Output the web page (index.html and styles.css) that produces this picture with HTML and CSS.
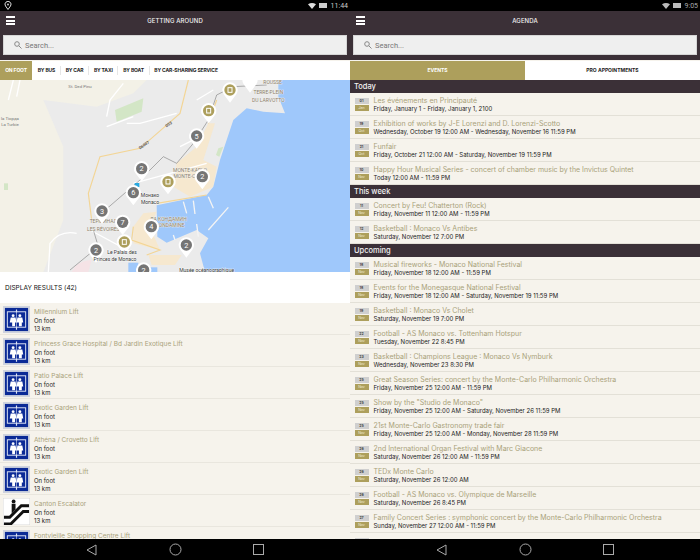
FILE: index.html
```html
<!DOCTYPE html>
<html lang="en">
<head>
<meta charset="utf-8">
<title>Monaco app</title>
<link rel="stylesheet" href="styles.css">
</head>
<body>
<svg class="defs" width="0" height="0" aria-hidden="true">
  <symbol id="lift" viewBox="0 0 28 28">
    <rect width="28" height="28" fill="#cfd3de"/>
    <rect x="2" y="2" width="24" height="24" fill="#0b2a96"/>
    <rect x="4.500" y="6" width="19" height="16" fill="none" stroke="#dfe6f5" stroke-width="1"/>
    <path d="M14 3.500v3M14 21.500v3" stroke="#dfe6f5" stroke-width="1.200"/>
    <path d="M14 6v16" stroke="#dfe6f5" stroke-width=".6"/>
    <g fill="#fff">
      <circle cx="10.500" cy="10" r="1.500"/><path d="M8 12h5l1 5h-1.500v4h-3v-4H7z"/>
      <circle cx="17.500" cy="10" r="1.500"/><path d="M15 12h5l1 5h-1.500v4h-3v-4H14z"/>
    </g>
  </symbol>
  <symbol id="esc" viewBox="0 0 28 28">
    <rect width="28" height="28" fill="#fff" stroke="#d8d8d8"/>
    <circle cx="11" cy="3.500" r="2" fill="#111"/>
    <path d="M9 6h4v6l-4 4z" fill="#111"/>
    <path d="M1 20h6L19 8h8" fill="none" stroke="#111" stroke-width="3"/>
    <path d="M1 27h7L21 14h6" fill="none" stroke="#111" stroke-width="3"/>
  </symbol>
  <symbol id="pin" viewBox="-26 -26 52 66" overflow="visible">
    <path d="M0 38L-19 13A23 23 0 1 1 19 13Z" fill="#fff"/>
  </symbol>
</svg>

<main class="screens">
  <section class="screen">
    <div class="status">
      <svg class="status-pin" width="8" height="9" viewBox="0 0 8 9"><path d="M4 8.500L1.500 5A3 3 0 1 1 6.500 5Z" fill="none" stroke="#ddd"/><circle cx="4" cy="3.500" r=".9" fill="#ddd"/></svg>
      <span class="status-right">
        <svg width="8" height="6" viewBox="0 0 8 6"><path d="M0 1.200Q4-1 8 1.200L4 6Z" fill="#ddd"/></svg>
        <svg width="9" height="5" viewBox="0 0 9 5"><rect width="8" height="5" fill="#ccc"/></svg>
        <span class="clock">11:44</span>
      </span>
    </div>
    <header class="appbar">
      <div class="titlerow">
        <span class="burger"><i></i><i></i><i></i></span>
        <h1>GETTING AROUND</h1>
      </div>
      <div class="search">
        <svg width="8" height="8" viewBox="0 0 8 8"><circle cx="3" cy="3" r="2.300" fill="none" stroke="#888"/><path d="M4.800 4.800L7.500 7.500" stroke="#888"/></svg>
        <span>Search...</span>
      </div>
    </header>
    <div class="content">
      <nav class="modes">
        <span class="mode active">ON FOOT</span>
        <span class="mode">BY BUS</span>
        <span class="mode">BY CAR</span>
        <span class="mode">BY TAXI</span>
        <span class="mode">BY BOAT</span>
        <span class="mode">BY CAR-SHARING SERVICE</span>
      </nav>
      <svg class="map" viewBox="0 0 1050 576" width="350" height="192" role="img" aria-label="Map of Monaco">
        <rect width="1050" height="576" fill="#ebebeb"/>
        <path d="M0 0H440L400 40 290 80 130 60 190 200 190 420 130 576H0Z" fill="#f3f1e7"/>
        <path d="M345 90L430 55 425 95 350 125Z" fill="#d3e6c6"/>
        <path d="M12 310h12v20H12z" fill="#d3e6c6"/>
        <path d="M655 205l15-5-12 30-10-5z" fill="#d3e6c6"/>
        <path d="M610 240L645 130 625 130 590 200 530 250 520 320 570 350 640 320 650 260Z" fill="#f6e8cf"/>
        <path d="M400 440L430 400 470 395 450 440 480 510 400 490Z" fill="#f6e8cf"/>
        <path d="M445 525h100l-20 30h-70z" fill="#f6e8cf"/>
        <path d="M225 560q20-20 50-20l-10 36h-50z" fill="#f5e3e6"/>
        <path d="M835 0H1050V576H615L600 520 625 475 590 450 500 488 472 470 470 376 620 345 640 320 660 240 680 180 700 120 740 85 790 95 855 100 835 50Z" fill="#9fc8fb"/>
        <path d="M385 548h30v28h-30z" fill="#9fc8fb"/>
        <path d="M450 562h22v14h-22z" fill="#9fc8fb"/>
        <path d="M685 382L625 450M590 432L595 470M550 365L560 400M580 362L585 402M625 350L640 385M520 465L525 480" stroke="#f4f4f4" stroke-width="4" fill="none"/>
        <path d="M320 110L330 60 370 10M530 100L420 130 380 130M320 140L400 110M230 460Q180 450 150 490L145 576M400 310L620 250M270 450L400 520M40 0L25 60M60 0L50 50M540 200L600 170M590 60L640 30" stroke="#fff" stroke-width="4" fill="none"/>
        <path d="M565 0L540 100 420 205 300 230 265 340 275 420M400 440L395 480 480 510 440 525M470 370L620 345M650 60L625 130" stroke="#f3d595" stroke-width="3.500" fill="none"/>
        <path d="M800 15L700 20 650 45 625 120 580 190 530 250 490 230 420 300 310 395M280 450L295 500 210 570" stroke="#666" stroke-width="1.500" fill="none"/>
        <rect x="404" y="309" width="14" height="12" fill="#29a9e0"/>
        <g class="map-label">
          <text x="805" y="43" text-anchor="middle">TERRE-PLEIN</text>
          <text x="805" y="65" text-anchor="middle">DU LARVOTTO</text>
          <text x="790" y="12">ROUSSE</text>
          <text x="570" y="275" text-anchor="middle">MONTE-KARLO</text>
          <text x="553" y="293" text-anchor="middle">MONTE-C</text>
          <text x="310" y="430" text-anchor="middle">ТЕРМИНАЛ</text>
          <text x="310" y="452" text-anchor="middle">LES RÉVOIRES</text>
          <text x="505" y="423" text-anchor="middle">ЛА КОНДАМИН</text>
          <text x="510" y="442" text-anchor="middle">CONDAMINE</text>
        </g>
        <g class="map-grey">
          <text x="30" y="119" text-anchor="middle">la Tiopда</text>
          <text x="30" y="139" text-anchor="middle">La Turbie</text>
          <text x="205" y="25">St. Ded Pinu</text>
        </g>
        <g class="road-label">
          <text x="492" y="140" transform="rotate(-35 500 130)">D53</text>
          <text x="412" y="200" transform="rotate(-35 430 192)">D6007</text>
        </g>
        <use href="#pin" x="724" y="-26" width="52" height="66"/>
        <g class="pin"><use href="#pin" x="664" y="4" width="52" height="66"/><circle class="gold" cx="690" cy="30" r="17"/><rect class="gold-in" x="684" y="23" width="12" height="14"/></g>
        <g class="pin"><use href="#pin" x="600" y="66" width="52" height="66"/><circle class="gold" cx="626" cy="92" r="17"/><rect class="gold-in" x="620" y="85" width="12" height="14"/></g>
        <g class="pin"><use href="#pin" x="478" y="279" width="52" height="66"/><circle class="gold" cx="504" cy="305" r="17"/><rect class="gold-in" x="498" y="298" width="12" height="14"/></g>
        <g class="pin"><use href="#pin" x="347" y="460" width="52" height="66"/><circle class="gold" cx="373" cy="486" r="17"/><rect class="gold-in" x="367" y="479" width="12" height="14"/></g>
        <g class="pin"><use href="#pin" x="564" y="142" width="52" height="66"/><circle class="grey" cx="590" cy="168" r="17"/><text x="590" y="176">5</text></g>
        <g class="pin"><use href="#pin" x="399" y="240" width="52" height="66"/><circle class="grey" cx="425" cy="266" r="17"/><text x="425" y="274">2</text></g>
        <g class="pin"><use href="#pin" x="581" y="264" width="52" height="66"/><circle class="grey" cx="607" cy="290" r="17"/><text x="607" y="298">2</text></g>
        <g class="pin"><use href="#pin" x="374" y="312" width="52" height="66"/><circle class="grey" cx="400" cy="338" r="17"/><text x="400" y="346">6</text></g>
        <g class="pin"><use href="#pin" x="280" y="367" width="52" height="66"/><circle class="grey" cx="306" cy="393" r="17"/><text x="306" y="401">3</text></g>
        <g class="pin"><use href="#pin" x="342" y="401" width="52" height="66"/><circle class="grey" cx="368" cy="427" r="17"/><text x="368" y="435">7</text></g>
        <g class="pin"><use href="#pin" x="428" y="414" width="52" height="66"/><circle class="grey" cx="454" cy="440" r="17"/><text x="454" y="448">4</text></g>
        <g class="pin"><use href="#pin" x="533" y="469" width="52" height="66"/><circle class="grey" cx="559" cy="495" r="17"/><text x="559" y="503">2</text></g>
        <g class="pin"><use href="#pin" x="262" y="484" width="52" height="66"/><circle class="grey" cx="288" cy="510" r="17"/><text x="288" y="518">2</text></g>
        <g class="pin"><use href="#pin" x="405" y="544" width="52" height="66"/><circle class="grey" cx="431" cy="570" r="17"/><text x="431" y="578">2</text></g>
        <g class="map-name">
          <text x="450" y="351" text-anchor="middle">Монако</text>
          <text x="450" y="371" text-anchor="middle">Monaco</text>
          <text x="366" y="523" text-anchor="middle">Le Palais des</text>
          <text x="345" y="543" text-anchor="middle">Princes de Monaco</text>
          <text x="620" y="577" text-anchor="middle">Musée océanographique</text>
        </g>
      </svg>
      <h2 class="results">DISPLAY RESULTS (42)</h2>
      <ul class="places">
        <li class="place"><svg class="place-icon"><use href="#lift"/></svg><div><a>Millennium Lift</a><p>On foot</p><p>13 km</p></div></li>
        <li class="place"><svg class="place-icon"><use href="#lift"/></svg><div><a>Princess Grace Hospital / Bd Jardin Exotique Lift</a><p>On foot</p><p>13 km</p></div></li>
        <li class="place"><svg class="place-icon"><use href="#lift"/></svg><div><a>Patio Palace Lift</a><p>On foot</p><p>13 km</p></div></li>
        <li class="place"><svg class="place-icon"><use href="#lift"/></svg><div><a>Exotic Garden Lift</a><p>On foot</p><p>13 km</p></div></li>
        <li class="place"><svg class="place-icon"><use href="#lift"/></svg><div><a>Athéna / Crovetto Lift</a><p>On foot</p><p>13 km</p></div></li>
        <li class="place"><svg class="place-icon"><use href="#lift"/></svg><div><a>Exotic Garden Lift</a><p>On foot</p><p>13 km</p></div></li>
        <li class="place"><svg class="place-icon"><use href="#esc"/></svg><div><a>Canton Escalator</a><p>On foot</p><p>13 km</p></div></li>
        <li class="place"><svg class="place-icon"><use href="#lift"/></svg><div><a>Fontvieille Shopping Centre Lift</a></div></li>
      </ul>
    </div>
    <footer class="navbar">
      <svg width="11" height="12" viewBox="0 0 11 12"><path d="M10 1L1 6l9 5z" fill="none" stroke="#aaa"/></svg>
      <svg width="13" height="13" viewBox="0 0 13 13"><circle cx="6.500" cy="6.500" r="5.500" fill="none" stroke="#aaa"/></svg>
      <svg width="11" height="11" viewBox="0 0 11 11"><rect x=".5" y=".5" width="10" height="10" fill="none" stroke="#aaa"/></svg>
    </footer>
  </section>

  <section class="screen">
    <div class="status">
      <span class="status-right dim">
        <svg width="8" height="6" viewBox="0 0 8 6"><path d="M0 1.200Q4-1 8 1.200L4 6Z" fill="#bbb"/></svg>
        <svg width="9" height="5" viewBox="0 0 9 5"><rect width="8" height="5" fill="#bbb"/></svg>
        <span class="clock">9:05</span>
      </span>
    </div>
    <header class="appbar">
      <div class="titlerow">
        <span class="burger"><i></i><i></i><i></i></span>
        <h1>AGENDA</h1>
      </div>
      <div class="search">
        <svg width="8" height="8" viewBox="0 0 8 8"><circle cx="3" cy="3" r="2.300" fill="none" stroke="#888"/><path d="M4.800 4.800L7.500 7.500" stroke="#888"/></svg>
        <span>Search...</span>
      </div>
    </header>
    <div class="content">
      <nav class="segments">
        <span class="segment active">EVENTS</span>
        <span class="segment">PRO APPOINTMENTS</span>
      </nav>
      <h3 class="group">Today</h3>
      <ul>
        <li class="event"><div class="date"><b>01</b><span>Jan</span></div><div><a>Les événements en Principauté</a><p>Friday, January 1 - Friday, January 1, 2100</p></div></li>
        <li class="event"><div class="date"><b>19</b><span>Oct</span></div><div><a>Exhibition of works by J-E Lorenzi and D. Lorenzi-Scotto</a><p>Wednesday, October 19 12:00 AM - Wednesday, November 16 11:59 PM</p></div></li>
        <li class="event"><div class="date"><b>21</b><span>Oct</span></div><div><a>Funfair</a><p>Friday, October 21 12:00 AM - Saturday, November 19 11:59 PM</p></div></li>
        <li class="event"><div class="date"><b>10</b><span>Nov</span></div><div><a>Happy Hour Musical Series - concert of chamber music by the Invictus Quintet</a><p>Today 12:00 AM - 11:59 PM</p></div></li>
      </ul>
      <h3 class="group">This week</h3>
      <ul>
        <li class="event"><div class="date"><b>11</b><span>Nov</span></div><div><a>Concert by Feu! Chatterton (Rock)</a><p>Friday, November 11 12:00 AM - 11:59 PM</p></div></li>
        <li class="event"><div class="date"><b>12</b><span>Nov</span></div><div><a>Basketball : Monaco Vs Antibes</a><p>Saturday, November 12 7:00 PM</p></div></li>
      </ul>
      <h3 class="group">Upcoming</h3>
      <ul>
        <li class="event"><div class="date"><b>18</b><span>Nov</span></div><div><a>Musical fireworks - Monaco National Festival</a><p>Friday, November 18 12:00 AM - 11:59 PM</p></div></li>
        <li class="event"><div class="date"><b>18</b><span>Nov</span></div><div><a>Events for the Monegasque National Festival</a><p>Friday, November 18 12:00 AM - Saturday, November 19 11:59 PM</p></div></li>
        <li class="event"><div class="date"><b>19</b><span>Nov</span></div><div><a>Basketball : Monaco Vs Cholet</a><p>Saturday, November 19 7:00 PM</p></div></li>
        <li class="event"><div class="date"><b>22</b><span>Nov</span></div><div><a>Football - AS Monaco vs. Tottenham Hotspur</a><p>Tuesday, November 22 8:45 PM</p></div></li>
        <li class="event"><div class="date"><b>23</b><span>Nov</span></div><div><a>Basketball : Champions League : Monaco Vs Nymburk</a><p>Wednesday, November 23 8:30 PM</p></div></li>
        <li class="event"><div class="date"><b>25</b><span>Nov</span></div><div><a>Great Season Series: concert by the Monte-Carlo Philharmonic Orchestra</a><p>Friday, November 25 12:00 AM - 11:59 PM</p></div></li>
        <li class="event"><div class="date"><b>25</b><span>Nov</span></div><div><a>Show by the "Studio de Monaco"</a><p>Friday, November 25 12:00 AM - Saturday, November 26 11:59 PM</p></div></li>
        <li class="event"><div class="date"><b>25</b><span>Nov</span></div><div><a>21st Monte-Carlo Gastronomy trade fair</a><p>Friday, November 25 12:00 AM - Monday, November 28 11:59 PM</p></div></li>
        <li class="event"><div class="date"><b>26</b><span>Nov</span></div><div><a>2nd International Organ Festival with Marc Giacone</a><p>Saturday, November 26 12:00 AM - 11:59 PM</p></div></li>
        <li class="event"><div class="date"><b>26</b><span>Nov</span></div><div><a>TEDx Monte Carlo</a><p>Saturday, November 26 12:00 AM</p></div></li>
        <li class="event"><div class="date"><b>26</b><span>Nov</span></div><div><a>Football - AS Monaco vs. Olympique de Marseille</a><p>Saturday, November 26 8:45 PM</p></div></li>
        <li class="event"><div class="date"><b>27</b><span>Nov</span></div><div><a>Family Concert Series : symphonic concert by the Monte-Carlo Philharmonic Orchestra</a><p>Sunday, November 27 12:00 AM - 11:59 PM</p></div></li>
        <li class="event"><div class="date"><b>27</b></div></li>
      </ul>
    </div>
    <footer class="navbar">
      <svg width="11" height="12" viewBox="0 0 11 12"><path d="M10 1L1 6l9 5z" fill="none" stroke="#aaa"/></svg>
      <svg width="13" height="13" viewBox="0 0 13 13"><circle cx="6.500" cy="6.500" r="5.500" fill="none" stroke="#aaa"/></svg>
      <svg width="11" height="11" viewBox="0 0 11 11"><rect x=".5" y=".5" width="10" height="10" fill="none" stroke="#aaa"/></svg>
    </footer>
  </section>
</main>
</body>
</html>
```

FILE: styles.css
```css
* { box-sizing: border-box; margin: 0; padding: 0; }
html, body { width: 700px; height: 560px; overflow: hidden; background: #000; }
body { font-family: "Inter", "Liberation Sans", sans-serif; }
ul { list-style: none; }
a { display: block; }
.defs { position: absolute; }

.screens { display: flex; width: 700px; height: 560px; }
.screen { width: 350px; height: 560px; display: flex; flex-direction: column; background: #fff; overflow: hidden; }

.status { height: 11px; flex: none; background: #000; display: flex; align-items: center; padding: 0 2px 0 2px; }
.status-right { margin-left: auto; display: flex; align-items: center; gap: 3px; }
.clock { font-family: "Roboto", sans-serif; font-size: 7px; color: #ccc; }
.dim .clock { color: #aaa; }
.status-pin { display: block; margin-left: 2px; }

.appbar { height: 49px; flex: none; background: #3b3037; padding: 0 3px; }
.titlerow { height: 24px; padding-bottom: 6px; position: relative; display: flex; align-items: center; justify-content: center; }
.titlerow h1 { font-size: 6px; font-weight: 500; color: #f2f2f2; letter-spacing: .1px; }
.burger { position: absolute; left: 3px; top: 5px; width: 9px; height: 9px; display: flex; flex-direction: column; justify-content: space-between; }
.burger i { height: 2px; background: #fff; }
.search { height: 20px; background: #efefef; border: 1px solid #d6d6d6; display: flex; align-items: center; gap: 3px; padding-left: 10px; color: #777; font-family: "Roboto", sans-serif; font-size: 7.500px; }

.content { flex: 1; min-height: 0; overflow: hidden; background: #f6f3ec; padding-top: 1px; }

.modes { height: 19px; background: #fff; display: flex; align-items: center; }
.mode { height: 9px; line-height: 9px; font-size: 5px; font-weight: 700; color: #222; padding: 0 4.700px; border-left: 1px solid #e6e6e6; white-space: nowrap; letter-spacing: -.14px; }
.mode.active { height: 19px; line-height: 19px; width: 32px; padding: 0; text-align: center; background: #ad9f5c; color: #fff; border: 0; margin-right: 1px; }
.mode:nth-child(2) { border-left: 0; }

.map { display: block; }
.map text { font-family: "Roboto", "Liberation Sans", sans-serif; paint-order: stroke; }
.map-label text { font-size: 15px; fill: #8d7f68; stroke: #f2f2f2; stroke-width: 2px; }
.map-name text { font-size: 15px; fill: #333; stroke: #fff; stroke-width: 2px; }
.map-grey text { font-size: 13px; fill: #777; }
.road-label text { font-size: 12px; font-weight: 700; fill: #555; }
.pin text { font-size: 22px; fill: #fff; text-anchor: middle; }
.grey { fill: #757575; }
.gold { fill: #ad9f5c; }
.gold-in { fill: none; stroke: #fff; stroke-width: 3; }

.results { height: 31px; background: #fff; font-size: 6.500px; font-weight: 400; color: #111; line-height: 32px; padding-left: 5px; }
.place { height: 32px; padding: 3px 3px 0; display: flex; gap: 4px; border-bottom: 1px solid #e9e6de; }
.place-icon { width: 27px; height: 27px; flex: none; }
.place a { font-size: 6.500px; line-height: 8px; color: #a9a27a; padding-top: 2px; box-sizing: content-box; }
.place p { font-size: 6px; line-height: 7.800px; color: #222; position: relative; top: 1px; }

.segments { height: 19px; display: flex; background: #fff; }
.segment { flex: 1; text-align: center; font-size: 5px; font-weight: 700; line-height: 19px; color: #222; }
.segment.active { background: #ad9f5c; color: #fff; }

.group { height: 13px; background: #3b3037; color: #f2f2f2; font-size: 7.500px; font-weight: 500; line-height: 14px; padding-left: 4px; }
.event { height: 23px; display: flex; gap: 5px; padding: 4px 0 0 4.500px; border-bottom: 1px solid #e3e0d7; }
.date { width: 14px; flex: none; text-align: center; padding-top: 1px; }
.date b { display: block; height: 6px; line-height: 6px; background: #cfcfcf; color: #444; font-size: 3.500px; font-weight: 700; }
.date span { display: block; height: 6px; line-height: 6px; margin-top: 1px; background: #ad9f5c; color: #f3eedc; font-size: 3.500px; }
.event a { font-size: 7px; line-height: 8px; color: #a9a27a; white-space: nowrap; }
.event p { font-size: 6px; line-height: 8px; color: #222; white-space: nowrap; }

.navbar { height: 21px; flex: none; background: #000; display: flex; align-items: center; justify-content: space-between; padding: 0 86px 0 86px; position: relative; z-index: 1; }
```
